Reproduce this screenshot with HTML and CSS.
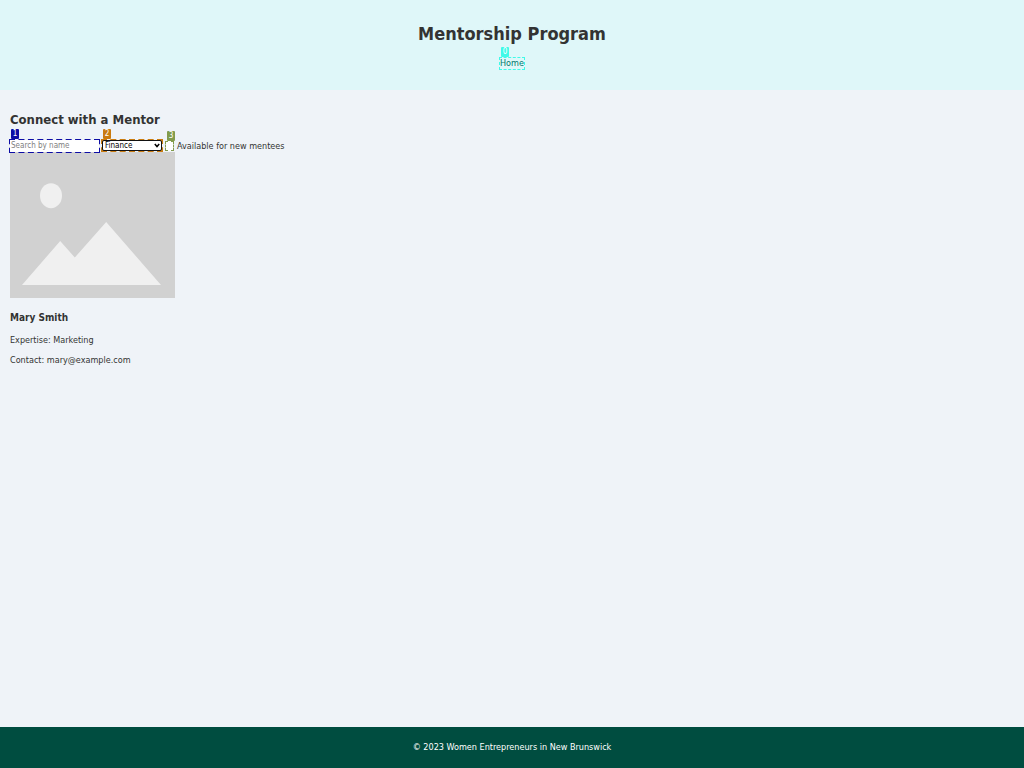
FILE: index.html
```html
<!DOCTYPE html>
<html lang="en">
<head>
<meta charset="utf-8">
<meta name="viewport" content="width=device-width, initial-scale=1">
<title>Mentorship Program</title>
<link rel="stylesheet" href="styles.css">
</head>
<body>
<header class="site-header">
  <h1 class="site-title">Mentorship Program</h1>
  <nav class="nav"><span class="mark mark-home"><a class="nav-link" href="#">Home</a><span class="tag">0</span></span></nav>
</header>
<main class="main">
  <h2 class="section-title">Connect with a Mentor</h2>
  <form class="filters">
    <span class="mark mark-search"><input class="search" type="text" placeholder="Search by name" aria-label="Search by name"><span class="tag">1</span></span>
    <span class="mark mark-field"><select class="field" aria-label="Expertise"><option>Finance</option><option>Marketing</option></select><svg class="chevron" viewBox="0 0 6 5" aria-hidden="true"><path d="M.8 1 3 3.500 5.200 1"/></svg><span class="tag">2</span></span>
    <span class="mark mark-check"><input class="check" type="checkbox" id="available"><span class="tag">3</span></span>
    <label class="check-label" for="available">Available for new mentees</label>
  </form>
  <article class="mentor">
    <svg class="photo" viewBox="0 0 165 146" role="img" aria-label="Mary Smith">
      <rect width="165" height="146" fill="#d1d1d1"/>
      <ellipse cx="41" cy="43.700" rx="11" ry="12.500" fill="#f0f0f0"/>
      <path d="M12 133 50.200 89 64.800 105.500 96.200 70 151 133Z" fill="#f0f0f0"/>
    </svg>
    <h3 class="mentor-name">Mary Smith</h3>
    <p class="detail">Expertise: Marketing</p>
    <p class="detail">Contact: mary@example.com</p>
  </article>
</main>
<footer class="site-footer"><p class="copyright">© 2023 Women Entrepreneurs in New Brunswick</p></footer>
</body>
</html>
```
FILE: styles.css
```css
* { box-sizing: border-box; }
body {
  margin: 0;
  min-height: 100vh;
  display: flex;
  flex-direction: column;
  background: #eff3f8;
  color: #333;
  font: 9px/14px "DejaVu Sans Condensed", "DejaVu Sans", sans-serif;
}
.site-header {
  padding: 22px 10px 20px;
  background: #dff7f9;
  text-align: center;
}
.site-title { margin: 0 0 11px; font-size: 18px; line-height: 24px; }
.nav { display: flex; justify-content: center; }
.nav-link { color: #00796b; text-decoration: none; }
.mark { position: relative; display: flex; }
.mark::after {
  content: "";
  position: absolute;
  inset: 0;
  border: 2px dashed var(--mark);
  pointer-events: none;
}
.tag {
  position: absolute;
  left: 2px;
  bottom: 100%;
  width: 8px;
  height: 10px;
  border-radius: 1px;
  background: var(--mark);
  color: #fff;
  font-size: 8px;
  line-height: 10px;
  text-align: center;
}
.mark-home { --mark: #40fae8; padding: 0 1px; }
.mark-home::after { border-width: 1px; }
.mark-home .nav-link { line-height: 13px; }
.mark-search { --mark: #0d0da5; }
.mark-field { --mark: #ca7b10; }
.mark-check { --mark: #829b4c; }
.main { flex: 1; padding: 21px 10px; }
.section-title { margin: 0 0 10px; font-size: 13px; line-height: 18px; }
.filters { display: flex; align-items: center; height: 13px; margin-left: -1px; }
.search {
  width: 89px;
  height: 12px;
  margin: 1px;
  position: relative;
  z-index: 1;
  padding: 0 1px;
  border: 0;
  background: #fff;
  font: 8px/12px "DejaVu Sans Condensed", "DejaVu Sans", sans-serif;
}
.search::placeholder { color: #808080; }
.mark-field { margin-left: 1px; padding: 1px; }
.field {
  width: 60px;
  height: 11px;
  padding: 0 2px;
  position: relative;
  z-index: 1;
  appearance: none;
  border: 1px solid #111;
  border-radius: 2px;
  background: #fff;
  color: #000;
  font: 8px/9px "DejaVu Sans Condensed", "DejaVu Sans", sans-serif;
}
.chevron {
  position: absolute;
  z-index: 2;
  right: 3px;
  top: 4px;
  width: 6px;
  height: 5px;
  fill: none;
  stroke: #000;
  stroke-width: 1.500;
  pointer-events: none;
}
.mark-check { margin: 0 3px 0 2px; }
.mark-check::after { border-width: 1px; }
.check {
  appearance: none;
  width: 9px;
  height: 10px;
  margin: 0;
  background: #fff;
}
.photo { display: block; width: 165px; height: 146px; }
.mentor-name { margin: 13px 0 8px; font-size: 10px; line-height: 14px; }
.detail { margin: 0 0 6px; }
.site-footer { padding: 13px 10px 14px; background: #004d40; color: #fff; text-align: center; }
.copyright { margin: 0; }
```
